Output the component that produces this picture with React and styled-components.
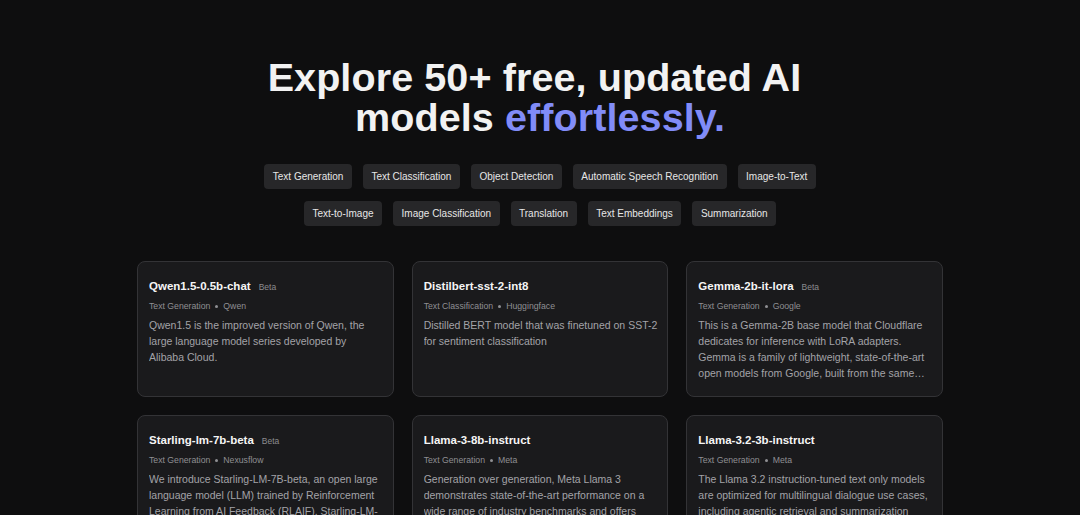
import React from 'react';
import styled, { createGlobalStyle } from 'styled-components';

const GlobalStyle = createGlobalStyle`
	html, body {
		margin: 0;
		padding: 0;
		background: #0e0e0f;
	}
	body {
		font-family: 'Liberation Sans', Arial, sans-serif;
		color: #ededed;
	}
	* {
		box-sizing: border-box;
	}
`;

const tagRows = [
	['Text Generation', 'Text Classification', 'Object Detection', 'Automatic Speech Recognition', 'Image-to-Text'],
	['Text-to-Image', 'Image Classification', 'Translation', 'Text Embeddings', 'Summarization'],
];

// \u00A0 keeps a few word pairs together so the lines wrap as in the listing
const models = [
	{
		name: 'Qwen1.5-0.5b-chat',
		beta: true,
		task: 'Text Generation',
		author: 'Qwen',
		text: 'Qwen1.5 is the improved version of Qwen, the large language model series developed by Alibaba\u00A0Cloud.',
	},
	{
		name: 'Distilbert-sst-2-int8',
		task: 'Text Classification',
		author: 'Huggingface',
		text: 'Distilled BERT model that was finetuned on SST-2 for sentiment classification',
	},
	{
		name: 'Gemma-2b-it-lora',
		beta: true,
		task: 'Text Generation',
		author: 'Google',
		text: 'This is a Gemma-2B base model that Cloudflare dedicates for inference with LoRA adapters. Gemma is a family of lightweight, state-of-the-art open models from Google, built from the same research and technology used to create the Gemini models.',
	},
	{
		name: 'Starling-lm-7b-beta',
		beta: true,
		task: 'Text Generation',
		author: 'Nexusflow',
		text: 'We introduce Starling-LM-7B-beta, an open large language model (LLM) trained by Reinforcement Learning from AI Feedback (RLAIF). Starling-LM-7B-beta is trained from Openchat-3.5-0106.',
	},
	{
		name: 'Llama-3-8b-instruct',
		task: 'Text Generation',
		author: 'Meta',
		text: 'Generation over generation, Meta Llama 3 demonstrates state-of-the-art performance on a wide range of industry benchmarks and offers new\u00A0capabilities, including improved reasoning.',
	},
	{
		name: 'Llama-3.2-3b-instruct',
		task: 'Text Generation',
		author: 'Meta',
		text: 'The Llama 3.2 instruction-tuned text only models are optimized for multilingual dialogue use cases, including agentic retrieval and summarization tasks.',
	},
];

const App = () => {
	return (
		<Page>
			<GlobalStyle />
			<Title>
				Explore 50+ free, updated AI{'\u00A0'}
				<br />
				models <Accent>effortlessly.</Accent>
			</Title>
			<Tags>
				{tagRows.map((row, i) => (
					<TagRow key={i}>
						{row.map((t) => (
							<Tag key={t}>{t}</Tag>
						))}
					</TagRow>
				))}
			</Tags>
			<Grid>
				{models.map((m) => (
					<Card key={m.name}>
						<CardHead>
							<Name>{m.name}</Name>
							{m.beta && <Beta>Beta</Beta>}
						</CardHead>
						<Meta>
							<span>{m.task}</span>
							<Dot />
							<span>{m.author}</span>
						</Meta>
						<Desc>{m.text}</Desc>
					</Card>
				))}
			</Grid>
		</Page>
	);
};

export default App;

const Page = styled.main`
	display: flex;
	flex-direction: column;
	align-items: center;
	padding: 57px 0 40px;
`;

const Title = styled.h1`
	margin: 0;
	font-size: 39.5px;
	line-height: 40px;
	font-weight: 700;
	letter-spacing: 0.1px;
	text-align: center;
	color: #f2f2f2;
`;

const Accent = styled.span`
	color: #818cf8;
`;

const Tags = styled.div`
	margin-top: 27px;
	display: flex;
	flex-direction: column;
	gap: 12px;
`;

const TagRow = styled.div`
	display: flex;
	justify-content: center;
	gap: 11px;
`;

const Tag = styled.button`
	height: 25px;
	padding: 0 8.5px;
	border: none;
	border-radius: 4px;
	background: #272729;
	color: #e6e6e6;
	font-family: 'Liberation Sans', Arial, sans-serif;
	font-size: 10px;
	cursor: pointer;
`;

const Grid = styled.section`
	margin-top: 35px;
	width: 806px;
	display: grid;
	grid-template-columns: repeat(3, 1fr);
	gap: 18px;
`;

const Card = styled.article`
	background: #1a1a1c;
	border: 1px solid #333336;
	border-radius: 8px;
	padding: 16px 8px 15px 11px;
`;

const CardHead = styled.div`
	display: flex;
	align-items: baseline;
	height: 17px;
`;

const Name = styled.h3`
	margin: 0;
	font-size: 11.5px;
	line-height: 17px;
	font-weight: 700;
	color: #f5f5f5;
`;

const Beta = styled.span`
	margin-left: 8px;
	font-size: 8.5px;
	color: #8c8c8f;
`;

const Meta = styled.div`
	margin-top: 4px;
	display: flex;
	align-items: center;
	gap: 5px;
	height: 14px;
	font-size: 8.7px;
	color: #8f8f93;
`;

const Dot = styled.i`
	width: 3px;
	height: 3px;
	border-radius: 50%;
	background: #8f8f93;
`;

const Desc = styled.p`
	margin: 4px 0 0;
	font-size: 10.5px;
	line-height: 16px;
	color: #a3a3a8;
	display: -webkit-box;
	-webkit-line-clamp: 4;
	-webkit-box-orient: vertical;
	overflow: hidden;
`;
